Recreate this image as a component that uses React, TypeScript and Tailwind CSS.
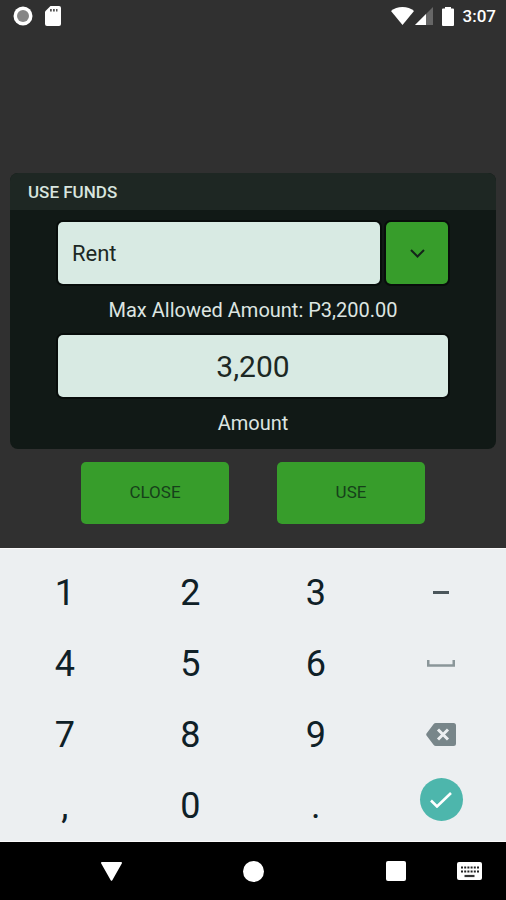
import { useRef, useState } from 'react';
import type { ReactNode } from 'react';

interface Key {
  id: string;
  label: string;
  content: ReactNode;
}

const categories = ['Rent', 'Groceries', 'Savings'];

function StatusBar() {
  return (
    <header className="flex h-8 items-center justify-between pl-[13px] pr-[10px]">
      <div className="flex items-center gap-3">
        <svg className="h-5 w-5" viewBox="0 0 20 20">
          <circle cx="10" cy="10" r="9.5" fill="#fff" />
          <circle cx="10" cy="10" r="6" fill="#858585" />
        </svg>
        <svg className="h-5 w-4" viewBox="0 0 16 20" fill="#fff">
          <path d="M5.5 0H14a2 2 0 0 1 2 2v16a2 2 0 0 1-2 2H2a2 2 0 0 1-2-2V5.5z" />
          <path d="M5 3h1.8v2.6H5zM8 3h1.8v2.6H8zM11 3h1.5v2.6H11z" fill="#555" />
        </svg>
      </div>
      <div className="flex items-center gap-[1px]">
        <svg className="h-[18px] w-[23px]" viewBox="0 0 23 18" fill="#fff">
          <path d="M11.5 18L0 4C3 1.4 7 0 11.5 0S20 1.4 23 4z" />
        </svg>
        <svg className="h-[18px] w-[18px]" viewBox="0 0 18 18">
          <path d="M18 0v18H0z" fill="#666" />
          <path d="M11 7v11H0z" fill="#fff" />
        </svg>
        <svg className="mx-2 h-[19px] w-3" viewBox="0 0 12 19" fill="#fff">
          <path d="M3 0h6v1.500H11a1 1 0 0 1 1 1V18a1 1 0 0 1-1 1H1a1 1 0 0 1-1-1V2.500a1 1 0 0 1 1-1h2z" />
        </svg>
        <span className="text-[17px] font-medium leading-5 text-white">3:07</span>
      </div>
    </header>
  );
}

const keys: Key[] = [
  { id: '1', label: '1', content: '1' },
  { id: '2', label: '2', content: '2' },
  { id: '3', label: '3', content: '3' },
  { id: 'minus', label: 'Minus', content: <span className="block h-[3px] w-4 bg-[#4b565b]" /> },
  { id: '4', label: '4', content: '4' },
  { id: '5', label: '5', content: '5' },
  { id: '6', label: '6', content: '6' },
  {
    id: 'space',
    label: 'Space',
    content: (
      <svg className="h-[7px] w-7" viewBox="0 0 28 7" fill="none" stroke="#8a9699" strokeWidth="2.5">
        <path d="M1.25 0v5.5h25.5V0" />
      </svg>
    ),
  },
  { id: '7', label: '7', content: '7' },
  { id: '8', label: '8', content: '8' },
  { id: '9', label: '9', content: '9' },
  {
    id: 'backspace',
    label: 'Backspace',
    content: (
      <svg className="h-[23px] w-[30px]" viewBox="0 0 30 23">
        <path d="M10 0h17.5A2.5 2.5 0 0 1 30 2.5v18a2.5 2.5 0 0 1-2.5 2.5H10a3 3 0 0 1-2.5-1.3L.5 12.5a2 2 0 0 1 0-2l7-9.2A3 3 0 0 1 10 0z" fill="#78868a" />
        <path d="M12 6.5l10 10M22 6.5l-10 10" stroke="#eceff1" strokeWidth="3" />
      </svg>
    ),
  },
  { id: 'comma', label: 'Comma', content: ',' },
  { id: '0', label: '0', content: '0' },
  { id: 'period', label: 'Period', content: '.' },
  {
    id: 'done',
    label: 'Done',
    content: (
      <span className="mb-3 flex h-[43px] w-[43px] items-center justify-center rounded-full bg-[#4db6ac]">
        <svg className="h-4 w-[22px]" viewBox="0 0 22 16" fill="none" stroke="#fff" strokeWidth="2.6">
          <path d="M1 8.5l6 6L21 1" />
        </svg>
      </span>
    ),
  },
];

function Keypad({ onPress }: { onPress: (id: string) => void }) {
  return (
    <div className="grid grid-cols-4 border-y border-[#fafafa] bg-[#eceff1] px-[2px] pt-2">
      {keys.map((key) => (
        <button
          key={key.id}
          type="button"
          aria-label={key.label}
          onClick={() => onPress(key.id)}
          className="flex h-[71px] items-center justify-center text-4xl text-[#0f2027]"
        >
          {key.content}
        </button>
      ))}
    </div>
  );
}

function NavBar() {
  return (
    <nav className="grid h-[58px] grid-cols-[1fr_64px_1fr] items-center bg-black">
      <div className="flex justify-end pr-[99px]">
        <button type="button" aria-label="Back">
          <svg className="h-[19px] w-[21px]" viewBox="0 0 21 19" fill="#fff">
            <path d="M1 0h19a1 1 0 0 1 .8 1.5L11.3 18.3a1 1 0 0 1-1.6 0L.2 1.5A1 1 0 0 1 1 0z" />
          </svg>
        </button>
      </div>
      <button type="button" aria-label="Home" className="flex justify-center">
        <span className="block h-[21px] w-[21px] rounded-full bg-white" />
      </button>
      <div className="flex items-center justify-end gap-[51px] pr-6">
        <button type="button" aria-label="Recent apps">
          <span className="block h-5 w-5 rounded-[2px] bg-white" />
        </button>
        <button type="button" aria-label="Switch keyboard">
          <svg className="h-[18px] w-[25px]" viewBox="0 0 25 18">
            <rect width="25" height="18" rx="2" fill="#fff" />
            <path d="M4 5.5h18M4 9.5h18" stroke="#222" strokeWidth="2" strokeDasharray="2 1.2" />
            <path d="M7.5 14h10" stroke="#333" strokeWidth="2.2" />
          </svg>
        </button>
      </div>
    </nav>
  );
}

export default function App() {
  const [category, setCategory] = useState('Rent');
  const [amount, setAmount] = useState('3,200');
  const selectRef = useRef<HTMLSelectElement>(null);

  const handleKey = (id: string) => {
    if (id === 'done') return;
    if (id === 'backspace') {
      setAmount((prev) => prev.slice(0, -1));
      return;
    }
    const chars: Record<string, string> = { minus: '-', space: ' ', comma: ',', period: '.' };
    setAmount((prev) => prev + (chars[id] ?? id));
  };

  return (
    <div className="flex min-h-screen flex-col bg-[#303030] font-['Roboto',sans-serif]">
      <StatusBar />

      <main className="flex flex-1 flex-col justify-end px-[10px] pb-6">
        <section className="overflow-hidden rounded-lg bg-[#111916]">
          <h1 className="bg-[#1e2723] px-[18px] pb-2 pt-[9px] text-[17px] font-medium leading-5 text-[#d8e5df]">
            USE FUNDS
          </h1>

          <div className="px-12 pt-3">
            <div className="flex gap-[6px]">
              <select
                ref={selectRef}
                aria-label="Category"
                value={category}
                onChange={(e) => setCategory(e.target.value)}
                className="h-[62px] min-w-0 flex-1 appearance-none rounded-[5px] bg-[#d8eae3] px-[14px] text-[22px] text-[#1c2824] ring-2 ring-[#080d0b]"
              >
                {categories.map((name) => (
                  <option key={name}>{name}</option>
                ))}
              </select>
              <button
                type="button"
                aria-label="Choose category"
                onClick={() => selectRef.current?.showPicker()}
                className="flex h-[62px] w-[62px] items-center justify-center rounded-[5px] bg-[#379d2b] ring-2 ring-[#080d0b]"
              >
                <svg className="h-[9px] w-[15px]" viewBox="0 0 15 9" fill="none" stroke="#14241a" strokeWidth="2">
                  <path d="M1 1l6.5 6.5L14 1" />
                </svg>
              </button>
            </div>

            <p className="pb-[13px] pt-[14px] text-center text-xl leading-6 text-[#dde5e1]">
              Max Allowed Amount: P3,200.00
            </p>

            <input
              id="amount"
              type="text"
              inputMode="decimal"
              value={amount}
              onChange={(e) => setAmount(e.target.value)}
              className="block h-[62px] w-full rounded-[5px] bg-[#d8eae3] text-center text-3xl text-[#1c2824] outline-none ring-2 ring-[#080d0b]"
            />
            <label htmlFor="amount" className="block py-[14px] text-center text-xl leading-6 text-[#dde5e1]">
              Amount
            </label>
          </div>
        </section>

        <div className="flex justify-center gap-12 pt-[13px]">
          <button type="button" className="h-[62px] w-[148px] rounded-[5px] bg-[#379d2b] text-[17px] text-[#16401a]">
            CLOSE
          </button>
          <button type="button" className="h-[62px] w-[148px] rounded-[5px] bg-[#379d2b] text-[17px] text-[#16401a]">
            USE
          </button>
        </div>
      </main>

      <Keypad onPress={handleKey} />
      <NavBar />
    </div>
  );
}
